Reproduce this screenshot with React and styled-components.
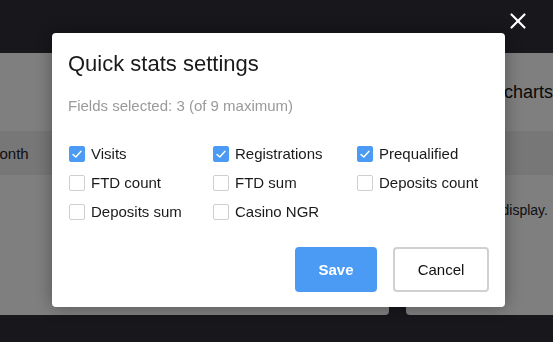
import styled, { createGlobalStyle } from 'styled-components';
import { X } from 'lucide-react';

const GlobalStyle = createGlobalStyle`
  html, body { margin: 0; padding: 0; }
  body {
    background: #302e38;
    font-family: "Liberation Sans", Arial, sans-serif;
    overflow: hidden;
  }
  * { box-sizing: border-box; }
`;

const Page = styled.div`
  width: 553px;
  height: 342px;
  overflow: hidden;
`;

const TopBar = styled.div`
  height: 53px;
  background: #302e38;
`;

const Panels = styled.div`
  display: flex;
  gap: 17px;
  margin-left: -38px;
`;

const Panel = styled.section`
  width: ${({ $w }) => $w}px;
  flex-shrink: 0;
  height: 262px;
  background: #ffffff;
  border-radius: 0 0 4px 4px;
`;

const PanelHead = styled.h2`
  margin: 0;
  height: 78px;
  padding: 0 ${({ $pad }) => $pad}px;
  display: flex;
  align-items: center;
  font-size: 18px;
  font-weight: 400;
  color: #111;
  white-space: nowrap;
`;

const Strip = styled.div`
  height: 44px;
  background: #eeeeee;
  padding: 0 25px;
  display: flex;
  align-items: center;
  font-size: 15px;
  color: #222;
`;

const Empty = styled.p`
  margin: 0;
  padding: 27px 27px 0;
  font-size: 14px;
  color: #222;
  white-space: nowrap;
`;

const Overlay = styled.div`
  position: fixed;
  inset: 0;
  background: rgba(0, 0, 0, 0.5);
  padding: 33px 0 0 52px;
`;

const Close = styled.button`
  position: absolute;
  top: 8px;
  right: 22px;
  padding: 0;
  border: 0;
  background: none;
  color: #fff;
  display: flex;
`;

const Modal = styled.div`
  width: 453px;
  background: #fff;
  border-radius: 4px;
  box-shadow: 0 0 18px rgba(0, 0, 0, 0.35);
  padding: 16px 16px 15px;
`;

const Title = styled.h1`
  margin: 0;
  height: 30px;
  line-height: 30px;
  font-size: 22px;
  font-weight: 400;
  color: #1a1a1a;
`;

const Hint = styled.p`
  margin: 17px 0 0;
  line-height: 20px;
  font-size: 15px;
  color: #9a9a9a;
`;

const Fields = styled.div`
  margin-top: 23px;
  display: grid;
  grid-template-columns: repeat(3, 144px);
  grid-auto-rows: 29px;
  padding-left: 1px;
`;

const Field = styled.label`
  display: flex;
  align-items: center;
  gap: 6px;
  font-size: 15px;
  color: #1a1a1a;
`;

const Box = styled.span`
  width: 16px;
  height: 16px;
  border-radius: 2px;
  border: 1px solid ${({ $on }) => ($on ? '#4b9bf5' : '#cfcfcf')};
  background: ${({ $on }) => ($on ? '#4b9bf5' : '#fff')};
  display: flex;
  align-items: center;
  justify-content: center;
`;

const Actions = styled.div`
  margin-top: 21px;
  display: flex;
  justify-content: flex-end;
  gap: 16px;
`;

const Button = styled.button`
  height: 45px;
  width: ${({ $w }) => $w}px;
  border-radius: 4px;
  font-family: inherit;
  font-size: 15px;
  border: 2px solid ${({ $primary }) => ($primary ? '#4b9bf5' : '#d0d0d0')};
  background: ${({ $primary }) => ($primary ? '#4b9bf5' : '#fff')};
  color: ${({ $primary }) => ($primary ? '#fff' : '#111')};
  font-weight: ${({ $primary }) => ($primary ? 700 : 400)};
`;

const fields = [
  ['Visits', true],
  ['Registrations', true],
  ['Prequalified', true],
  ['FTD count', false],
  ['FTD sum', false],
  ['Deposits count', false],
  ['Deposits sum', false],
  ['Casino NGR', false],
];

function Check() {
  return (
    <svg width="12" height="12" viewBox="0 0 12 12" fill="none">
      <polyline points="2 6.5 4.8 9 10 3.2" stroke="#fff" strokeWidth="1.4" strokeLinecap="round" strokeLinejoin="round" />
    </svg>
  );
}

export default function App() {
  const selected = fields.filter(f => f[1]).length;
  return (
    <Page>
      <GlobalStyle />
      <TopBar />
      <Panels>
        <Panel $w={427}>
          <PanelHead $pad={25} />
          <Strip>Month</Strip>
        </Panel>
        <Panel $w={220}>
          <PanelHead $pad={38}>Funnel charts</PanelHead>
          <Strip />
          <Empty>No data to display.</Empty>
        </Panel>
      </Panels>

      <Overlay>
        <Close aria-label="Close"><X size={26} strokeWidth={2} /></Close>
        <Modal>
          <Title>Quick stats settings</Title>
          <Hint>Fields selected: {selected} (of 9 maximum)</Hint>
          <Fields>
            {fields.map(([name, on]) => (
              <Field key={name}>
                <Box $on={on}>{on && <Check />}</Box>
                {name}
              </Field>
            ))}
          </Fields>
          <Actions>
            <Button $primary $w={82}>Save</Button>
            <Button $w={96}>Cancel</Button>
          </Actions>
        </Modal>
      </Overlay>
    </Page>
  );
}
